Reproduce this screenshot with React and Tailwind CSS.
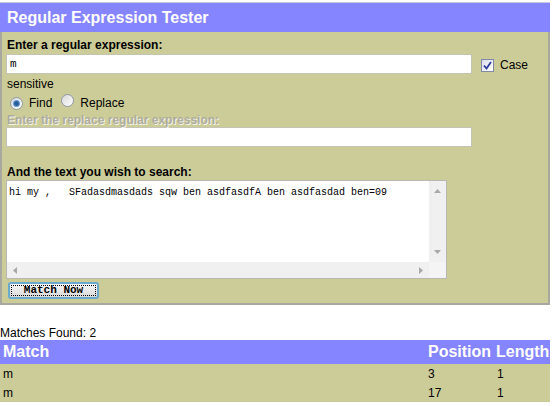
import { useState } from "react";

const matches = [
  { match: "m", position: 3, length: 1 },
  { match: "m", position: 17, length: 1 },
];

const sample = "hi my ,   SFadasdmasdads sqw ben asdfasdfA ben asdfasdad ben=09";

// tiny triangle used by the fake scrollbars
const Arrow = ({ dir }) => {
  const pts = {
    up: "0,4 3.5,0 7,4",
    down: "0,0 3.5,4 7,0",
    left: "4,0 0,3.5 4,7",
    right: "0,0 4,3.5 0,7",
  }[dir];
  const size = dir === "up" || dir === "down" ? { w: 7, h: 4 } : { w: 4, h: 7 };
  return (
    <svg width={size.w} height={size.h} viewBox={`0 0 ${size.w} ${size.h}`}>
      <polygon points={pts} fill="#a8a8a8" />
    </svg>
  );
};

const Radio = ({ checked }) => (
  <span className="relative inline-flex w-[13px] h-[13px] rounded-full border border-[#8e9aa8] bg-gradient-to-br from-[#d8d8d8] to-[#ffffff] items-center justify-center">
    {checked && <span className="w-[5px] h-[5px] rounded-full bg-[#2a5f9e] shadow-[0_0_0_1px_#6aa0d8]" />}
  </span>
);

const App = () => {
  const [caseSensitive] = useState(true);

  return (
    <div className="w-[550px] pt-[2px] font-['Liberation_Sans',Arial,sans-serif] text-black">
      {/* tester panel */}
      <div className="h-[30px] bg-[#8585ff] border-t border-[#c8c8e0] pl-[7px] flex items-center">
        <h1 className="text-[16px] font-bold text-white leading-none">Regular Expression Tester</h1>
      </div>
      <div className="bg-[#cccc99] border-x-2 border-b-2 border-[#a8a8a0] pl-[4px] pt-[6px] pb-[4px]">
        <p className="text-[12px] font-bold leading-[14px] pl-[1px]">Enter a regular expression:</p>
        <div className="flex items-center mt-[2px] h-[20px]">
          <div className="w-[466px] h-[20px] bg-white border border-[#c4c4b4] flex items-center pl-[3px] font-['Liberation_Mono',monospace] text-[11px]">
            m
          </div>
          <span className="ml-[9px] mt-[2px] w-[13px] h-[13px] border border-[#8088a8] bg-gradient-to-br from-[#dcdcea] to-[#ffffff] flex items-center justify-center">
            {caseSensitive && (
              <svg width="9" height="9" viewBox="0 0 9 9">
                <path d="M1 4.5 L3.5 7.5 L8 1" stroke="#2c3c9c" strokeWidth="1.8" fill="none" />
              </svg>
            )}
          </span>
          <span className="ml-[6px] mt-[2px] text-[12px]">Case</span>
        </div>
        <p className="text-[12px] leading-[14px] mt-[3px] pl-[1px]">sensitive</p>
        <div className="flex items-center h-[16px] mt-[4px] text-[12px] pl-[4px]">
          <Radio checked />
          <span className="ml-[6px]">Find</span>
          <span className="ml-[9px]"><Radio /></span>
          <span className="ml-[6px]">Replace</span>
        </div>
        <p className="text-[12px] font-bold leading-[14px] mt-[2px] pl-[1px] text-[#aeac9c] [text-shadow:1px_1px_0_#f4f4ec]">
          Enter the replace regular expression:
        </p>
        <div className="w-[466px] h-[20px] bg-white border border-[#c4c4b4]" />
        <p className="text-[12px] font-bold leading-[14px] mt-[18px] pl-[1px]">And the text you wish to search:</p>

        {/* textarea with its scrollbars */}
        <div className="mt-[1px] w-[441px] h-[99px] border border-[#b8b8b0] bg-white flex flex-col">
          <div className="flex flex-1">
            <div className="flex-1 pl-[2px] pt-[6px] font-['Liberation_Mono',monospace] text-[10px] leading-[12px] whitespace-pre">
              {sample}
            </div>
            <div className="w-[17px] bg-[#f0f0f0] flex flex-col items-center justify-between py-[8px]">
              <Arrow dir="up" />
              <Arrow dir="down" />
            </div>
          </div>
          <div className="h-[16px] flex">
            <div className="flex-1 bg-[#f0f0f0] flex items-center justify-between px-[6px]">
              <Arrow dir="left" />
              <Arrow dir="right" />
            </div>
            <div className="w-[17px] bg-[#f4f4f4]" />
          </div>
        </div>

        <button className="mt-[3px] ml-[2px] w-[91px] h-[17px] rounded-[3px] border-2 border-[#6aa8cc] bg-gradient-to-b from-[#f8f8f8] to-[#d8d8d8] p-[1px] flex">
          <span className="flex-1 border border-dotted border-black flex items-center justify-center font-['Liberation_Mono',monospace] text-[11px] font-bold leading-none">
            Match Now
          </span>
        </button>
      </div>

      {/* results */}
      <p className="mt-[21px] text-[12px] leading-[14px]">Matches Found: {matches.length}</p>
      <table className="w-[550px] border-collapse bg-[#cccc99] text-[12px]">
        <thead>
          <tr className="bg-[#8585ff] text-white text-[16px] font-bold h-[22px] text-left">
            <th className="pl-[3px]">Match</th>
            <th className="w-[69px] pl-[2px]">Position</th>
            <th className="w-[55px] pl-[1px]">Length</th>
          </tr>
        </thead>
        <tbody>
          {matches.map((m, i) => (
            <tr key={i} className="h-[19px]">
              <td className="pl-[3px]">{m.match}</td>
              <td className="pl-[2px]">{m.position}</td>
              <td className="pl-[2px]">{m.length}</td>
            </tr>
          ))}
        </tbody>
      </table>
    </div>
  );
};

export default App;
